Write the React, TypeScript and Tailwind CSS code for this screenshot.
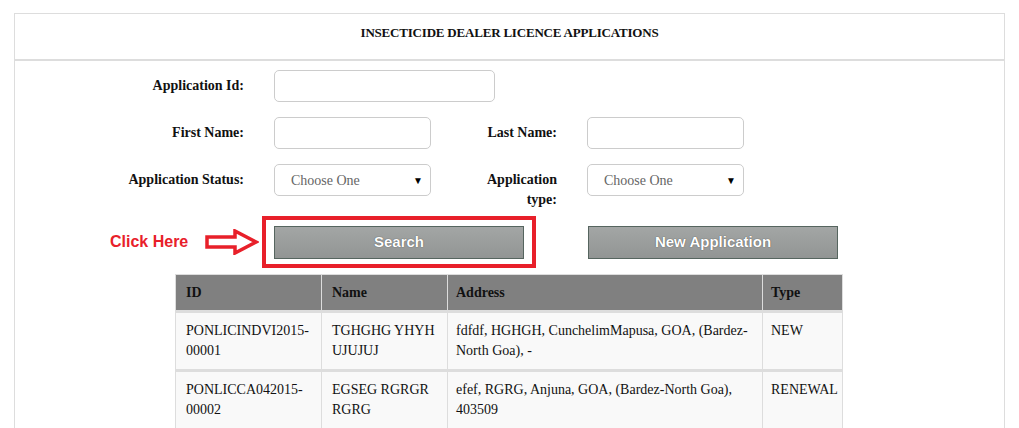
import React from "react";

const serif = { fontFamily: '"Liberation Serif", "DejaVu Serif", serif' };

function Label({ children, w }: { children: React.ReactNode; w: string }) {
  return (
    <div className={`${w} shrink-0 text-right font-bold text-[14px] leading-[20px] text-[#111]`}>
      {children}
    </div>
  );
}

function Select() {
  return (
    <div className="w-[157px] h-[32px] shrink-0 rounded-[5px] border border-[#ccc] bg-white flex items-center justify-between pl-[16px] pr-[7px]">
      <span className="text-[14px] text-[#666]">Choose One</span>
      <span className="text-[10px] text-black">▼</span>
    </div>
  );
}

const rows = [
  {
    id: "PONLICINDVI2015-00001",
    name: "TGHGHG YHYH UJUJUJ",
    address: "fdfdf, HGHGH, CunchelimMapusa, GOA, (Bardez-North Goa), -",
    type: "NEW",
  },
  {
    id: "PONLICCA042015-00002",
    name: "EGSEG RGRGR RGRG",
    address: "efef, RGRG, Anjuna, GOA, (Bardez-North Goa), 403509",
    type: "RENEWAL",
  },
];

const btn =
  "w-[250px] h-[33px] border border-[#56655f] bg-gradient-to-b from-[#a3a6a5] to-[#929594] text-white font-bold text-[15px] [text-shadow:0_0_1px_#333]";

export default function App() {
  return (
    <div className="w-[1019px] h-[428px] overflow-hidden bg-white pt-[13px] pl-[14px]" style={serif}>
      <div className="w-[991px] border border-[#ddd] h-[430px]">
        <div className="h-[47px] border-b-2 border-[#ddd] flex items-start justify-center pt-[9px]">
          <h1 className="font-bold text-[13px] text-[#111] tracking-[-0.2px]">INSECTICIDE DEALER LICENCE APPLICATIONS</h1>
        </div>

        <div className="flex flex-col pt-[9px]">
          <div className="flex items-center">
            <Label w="w-[229px]">Application Id:</Label>
            <div className="ml-[30px] w-[221px] h-[32px] rounded-[5px] border border-[#ccc]" />
          </div>

          <div className="flex items-center mt-[15px]">
            <Label w="w-[229px]">First Name:</Label>
            <div className="ml-[30px] w-[157px] h-[32px] rounded-[5px] border border-[#ccc]" />
            <Label w="w-[126px]">Last Name:</Label>
            <div className="ml-[30px] w-[157px] h-[32px] rounded-[5px] border border-[#ccc]" />
          </div>

          <div className="flex items-start mt-[15px] h-[45px]">
            <Label w="w-[229px] pt-[6px]">Application Status:</Label>
            <div className="ml-[30px]">
              <Select />
            </div>
            <Label w="w-[126px] pt-[6px]">
              Application
              <br />
              type:
            </Label>
            <div className="ml-[30px]">
              <Select />
            </div>
          </div>

          <div className="flex items-center mt-[7px]" style={{ fontFamily: '"Liberation Sans", Arial, sans-serif' }}>
            <div className="w-[190px] pl-[95px] text-[16px] font-bold text-[#e8202a]">Click Here</div>
            <svg width="54" height="26" viewBox="0 0 54 26">
              <polygon
                points="2,8 30,8 30,2 51,13 30,24 30,18 2,18"
                fill="none"
                stroke="#e8202a"
                strokeWidth="3.5"
                strokeLinejoin="miter"
              />
            </svg>
            <div className="ml-[3px] border-[4px] border-[#e8202a] pt-[6px] pb-[5px] px-[8px]">
              <button className={btn}>Search</button>
            </div>
            <button className={`ml-[52px] ${btn}`}>New Application</button>
          </div>

          <div className="ml-[160px] mt-[6px]">
            <table className="table-fixed border-collapse w-[667px] text-[14px] text-[#111]">
              <colgroup>
                <col className="w-[146px]" />
                <col className="w-[126px]" />
                <col className="w-[315px]" />
                <col className="w-[80px]" />
              </colgroup>
              <thead>
                <tr className="bg-[#808080] h-[37px]">
                  <th className="border-x border-t border-[#ddd] border-b-[3px] text-left font-bold px-[10px]">ID</th>
                  <th className="border-x border-t border-[#ddd] border-b-[3px] text-left font-bold px-[10px]">Name</th>
                  <th className="border-x border-t border-[#ddd] border-b-[3px] text-left font-bold px-[8px]">Address</th>
                  <th className="border-x border-t border-[#ddd] border-b-[3px] text-left font-bold px-[8px]">Type</th>
                </tr>
              </thead>
              <tbody>
                {rows.map((r) => (
                  <tr key={r.id} className="bg-[#f9f9f9] align-top">
                    <td className="border-x border-b-[3px] border-[#ddd] px-[10px] pt-[8px] pb-[8px] leading-[20px]">
                      {r.id.split("-")[0]}-
                      <br />
                      {r.id.split("-")[1]}
                    </td>
                    <td className="border-x border-b-[3px] border-[#ddd] px-[10px] pt-[8px] pb-[8px] leading-[20px]">{r.name}</td>
                    <td className="border-x border-b-[3px] border-[#ddd] px-[8px] pt-[8px] pb-[8px] leading-[20px]">{r.address}</td>
                    <td className="border-x border-b-[3px] border-[#ddd] px-[8px] pt-[8px] pb-[8px] leading-[20px]">{r.type}</td>
                  </tr>
                ))}
              </tbody>
            </table>
          </div>
        </div>
      </div>
    </div>
  );
}
